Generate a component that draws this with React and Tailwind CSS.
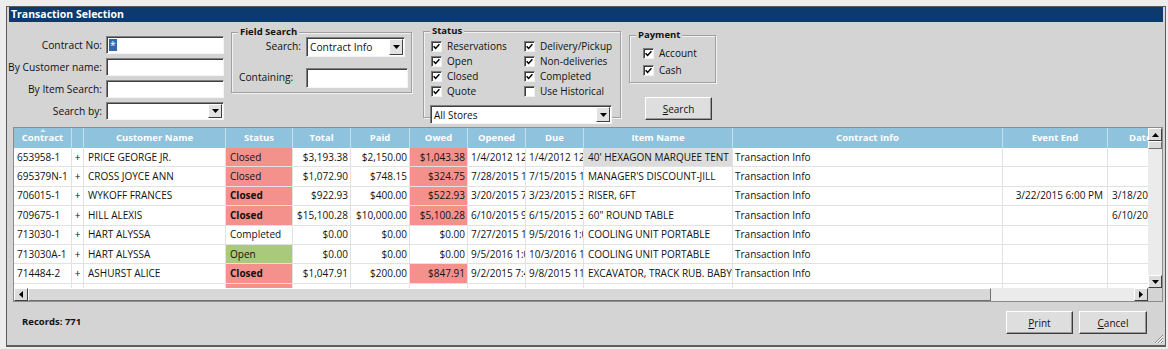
import React from "react";

const rows = [
  { contract: "653958-1", name: "PRICE GEORGE JR.", status: "Closed", bold: false, total: "$3,193.38", paid: "$2,150.00", owed: "$1,043.38", opened: "1/4/2012 12:00 PM", due: "1/4/2012 12:00 PM", item: "40' HEXAGON MARQUEE TENT", itemSel: true, eventEnd: "", dateOut: "" },
  { contract: "695379N-1", name: "CROSS JOYCE ANN", status: "Closed", bold: false, total: "$1,072.90", paid: "$748.15", owed: "$324.75", opened: "7/28/2015 11:02 AM", due: "7/15/2015 11:00 AM", item: "MANAGER'S DISCOUNT-JILL", eventEnd: "", dateOut: "" },
  { contract: "706015-1", name: "WYKOFF FRANCES", status: "Closed", bold: true, total: "$922.93", paid: "$400.00", owed: "$522.93", opened: "3/20/2015 7:14 PM", due: "3/23/2015 3:00 PM", item: "RISER, 6FT", eventEnd: "3/22/2015 6:00 PM", dateOut: "3/18/2015 9:00 AM" },
  { contract: "709675-1", name: "HILL ALEXIS", status: "Closed", bold: true, total: "$15,100.28", paid: "$10,000.00", owed: "$5,100.28", opened: "6/10/2015 9:41 AM", due: "6/15/2015 3:00 PM", item: "60\" ROUND TABLE", eventEnd: "", dateOut: "6/10/2015 9:00 AM" },
  { contract: "713030-1", name: "HART ALYSSA", status: "Completed", bold: false, total: "$0.00", paid: "$0.00", owed: "$0.00", opened: "7/27/2015 10:12 AM", due: "9/5/2016 1:00 PM", item: "COOLING UNIT PORTABLE", eventEnd: "", dateOut: "" },
  { contract: "713030A-1", name: "HART ALYSSA", status: "Open", bold: false, total: "$0.00", paid: "$0.00", owed: "$0.00", opened: "9/5/2016 1:00 PM", due: "10/3/2016 1:00 PM", item: "COOLING UNIT PORTABLE", eventEnd: "", dateOut: "" },
  { contract: "714484-2", name: "ASHURST ALICE", status: "Closed", bold: true, total: "$1,047.91", paid: "$200.00", owed: "$847.91", opened: "9/2/2015 7:45 AM", due: "9/8/2015 11:00 AM", item: "EXCAVATOR, TRACK RUB. BABY", eventEnd: "", dateOut: "" },
  { contract: "714502-1", name: "MILLER DAVID", status: "Closed", bold: false, total: "$1,210.00", paid: "$1,210.00", owed: "$0.00", opened: "9/3/2015 8:10 AM", due: "9/9/2015 11:00 AM", item: "TENT, 20X20", eventEnd: "", dateOut: "" },
];

const Check = ({ checked }) => (
  <span className="w-[11px] h-[11px] shrink-0 bg-white border border-t-[#7a7a7a] border-l-[#7a7a7a] border-b-[#f0f0f0] border-r-[#f0f0f0] shadow-[inset_1px_1px_0_#3a3a3a] flex items-center justify-center">
    {checked && (
      <svg width="7" height="7" viewBox="0 0 7 7">
        <path d="M0.6 3.2 L2.6 5.4 L6.4 1.2" stroke="#000" strokeWidth="1.5" fill="none" />
      </svg>
    )}
  </span>
);

const CheckRow = ({ label, checked }) => (
  <div className="flex items-center gap-[5px] h-[15px]">
    <Check checked={checked} />
    <span className="leading-[15px] whitespace-nowrap">{label}</span>
  </div>
);

const Sunken = ({ className = "", children }) => (
  <div className={`bg-white border border-t-[#808080] border-l-[#808080] border-b-[#f4f4f4] border-r-[#f4f4f4] shadow-[inset_1px_1px_0_#404040] flex items-center ${className}`}>
    {children}
  </div>
);

const DropButton = () => (
  <span className="ml-auto w-[14px] h-[calc(100%-2px)] mr-[1px] bg-[#e2e2e2] border border-t-white border-l-white border-b-[#404040] border-r-[#404040] flex items-center justify-center shrink-0">
    <svg width="7" height="4" viewBox="0 0 7 4">
      <polygon points="0,0 7,0 3.5,4" fill="#000" />
    </svg>
  </span>
);

const Select = ({ value, className = "" }) => (
  <Sunken className={className}>
    <span className="pl-[3px] leading-[14px] whitespace-nowrap">{value}</span>
    <DropButton />
  </Sunken>
);

const Group = ({ title, className = "", children }) => (
  <div className={`relative border border-[#a0a0a0] shadow-[1px_1px_0_#f2f2f2,inset_1px_1px_0_#f2f2f2] ${className}`}>
    <span className="absolute -top-[8px] left-[6px] bg-[#d4d4d4] px-[2px] text-[9.5px] font-bold leading-[14px]">{title}</span>
    {children}
  </div>
);

const Button = ({ hot, rest, className = "" }) => (
  <button className={`bg-[#dedede] border border-t-white border-l-white border-b-[#3c3c3c] border-r-[#3c3c3c] shadow-[inset_-1px_-1px_0_#9a9a9a] text-[10px] leading-none flex items-center justify-center ${className}`}>
    <span><span className="underline">{hot}</span>{rest}</span>
  </button>
);

const statusBg = (s) => (s === "Closed" ? "bg-[#f4918d]" : s === "Open" ? "bg-[#a9c97b]" : "");

const cell = "h-full flex items-center overflow-hidden whitespace-nowrap border-r border-b border-[#e2e2e2] shrink-0";

const label = "justify-self-end whitespace-nowrap leading-[18px]";

const App = () => {
  return (
    <div className="w-[1168px] h-[349px] bg-[#ededed] pt-[6px] pl-[6px] overflow-hidden font-['Open_Sans','Noto_Sans',sans-serif] text-[10px] text-[#111]">
      <div className="relative w-[1160px] h-[341px] border border-b-2 border-[#5c5c5c] bg-[#d4d4d4] px-[2px] flex flex-col">
        {/* title bar */}
        <div className="h-[15px] bg-[#0b3a6e] text-white font-bold text-[10.5px] leading-[15px] pl-[2px] shrink-0">
          Transaction Selection
        </div>

        {/* search form */}
        <div className="h-[105px] flex items-start shrink-0">
          <div className="mt-[14px] grid grid-cols-[93px_118px] gap-x-[4px] gap-y-[4px] text-[10.25px]">
            <span className={label}>Contract No:</span>
            <Sunken className="h-[18px]">
              <span className="ml-[2px] bg-[#3266b3] text-white leading-[12px] px-[1px]">*</span>
            </Sunken>
            <span className={label}>By Customer name:</span>
            <Sunken className="h-[18px]" />
            <span className={label}>By Item Search:</span>
            <Sunken className="h-[18px]" />
            <span className={label}>Search by:</span>
            <Select value="" className="h-[18px]" />
          </div>

          <Group title="Field Search" className="ml-[7px] mt-[10px] w-[181px] h-[61px] text-[10.25px]">
            <div className="pl-[7px] pt-[4px] grid grid-cols-[62px_auto] gap-x-[5px] gap-y-[11px] items-center">
              <span className="text-right">Search:</span>
              <Select value="Contract Info" className="h-[20px] w-[99px]" />
              <span>Containing:</span>
              <Sunken className="h-[20px] w-[102px]" />
            </div>
          </Group>

          <Group title="Status" className="ml-[11px] mt-[9px] w-[198px] h-[87px]">
            <div className="pl-[7px] pt-[7px] grid grid-cols-[93px_auto]">
              <CheckRow label="Reservations" checked />
              <CheckRow label="Delivery/Pickup" checked />
              <CheckRow label="Open" checked />
              <CheckRow label="Non-deliveries" checked />
              <CheckRow label="Closed" checked />
              <CheckRow label="Completed" checked />
              <CheckRow label="Quote" checked />
              <CheckRow label="Use Historical" />
            </div>
            <Select value="All Stores" className="ml-[6px] mt-[6px] h-[19px] w-[182px]" />
          </Group>

          <div className="ml-[8px] flex flex-col">
            <Group title="Payment" className="mt-[13px] w-[87px] h-[48px]">
              <div className="pl-[13px] pt-[10px] flex flex-col gap-[2px]">
                <CheckRow label="Account" checked />
                <CheckRow label="Cash" checked />
              </div>
            </Group>
            <Button hot="S" rest="earch" className="ml-[16px] mt-[14px] w-[67px] h-[23px]" />
          </div>
        </div>

        {/* grid */}
        <div className="ml-[4px] w-[1150px] h-[175px] border border-[#8c8c8c] bg-white flex flex-col shrink-0">
          <div className="flex h-[160px]">
            <div className="flex-1 overflow-hidden">
              <div className="w-max">
                <div className="flex h-[20px] bg-[#8fc2dc] text-white font-bold text-[9.5px]">
                  {[
                    ["Contract", "w-[58px]"],
                    ["", "w-[12px]"],
                    ["Customer Name", "w-[142px]"],
                    ["Status", "w-[67px]"],
                    ["Total", "w-[58px]"],
                    ["Paid", "w-[59px]"],
                    ["Owed", "w-[58px]"],
                    ["Opened", "w-[58px]"],
                    ["Due", "w-[58px]"],
                    ["Item Name", "w-[149px]"],
                    ["Contract Info", "w-[270px]"],
                    ["Event End", "w-[105px]"],
                    ["Date Out", "w-[86px]"],
                  ].map(([text, w], i) => (
                    <div key={i} className={`${w} relative h-full flex items-center justify-center whitespace-nowrap border-r border-[#c4deeb] shrink-0`}>
                      {i === 0 && (
                        <svg className="absolute top-[1px] left-[26px]" width="6" height="3" viewBox="0 0 6 3">
                          <polygon points="0,3 6,3 3,0" fill="#d6ebf5" />
                        </svg>
                      )}
                      {text}
                    </div>
                  ))}
                </div>
                {rows.map((r) => (
                  <div key={r.contract} className="flex h-[19.4px]">
                    <div className={`${cell} w-[58px] pl-[3px]`}>{r.contract}</div>
                    <div className={`${cell} w-[12px] justify-center`}>+</div>
                    <div className={`${cell} w-[142px] pl-[4px]`}>{r.name}</div>
                    <div className={`${cell} w-[67px] pl-[4px] ${statusBg(r.status)} ${r.bold ? "font-bold" : ""}`}>{r.status}</div>
                    <div className={`${cell} w-[58px] justify-end pr-[2px]`}>{r.total}</div>
                    <div className={`${cell} w-[59px] justify-end pr-[2px]`}>{r.paid}</div>
                    <div className={`${cell} w-[58px] justify-end pr-[2px] ${r.owed !== "$0.00" ? "bg-[#f4918d]" : ""}`}>{r.owed}</div>
                    <div className={`${cell} w-[58px] pl-[3px]`}>{r.opened}</div>
                    <div className={`${cell} w-[58px] pl-[3px]`}>{r.due}</div>
                    <div className={`${cell} w-[149px] pl-[4px] ${r.itemSel ? "bg-[#dcdcdc]" : ""}`}>{r.item}</div>
                    <div className={`${cell} w-[270px] pl-[2px]`}>Transaction Info</div>
                    <div className={`${cell} w-[105px] justify-end pr-[4px]`}>{r.eventEnd}</div>
                    <div className={`${cell} w-[86px] pl-[4px]`}>{r.dateOut}</div>
                  </div>
                ))}
              </div>
            </div>
            {/* vertical scrollbar */}
            <div className="w-[14px] bg-[#ebebeb] flex flex-col shrink-0">
              <div className="h-[13px] bg-[#dcdcdc] border border-t-white border-l-white border-b-[#404040] border-r-[#404040] flex items-center justify-center">
                <svg width="7" height="4" viewBox="0 0 7 4"><polygon points="0,4 7,4 3.5,0" fill="#000" /></svg>
              </div>
              <div className="h-[8px] bg-[#dcdcdc] border border-t-white border-l-white border-b-[#707070] border-r-[#707070]" />
              <div className="flex-1" />
              <div className="h-[13px] bg-[#dcdcdc] border border-t-white border-l-white border-b-[#404040] border-r-[#404040] flex items-center justify-center">
                <svg width="7" height="4" viewBox="0 0 7 4"><polygon points="0,0 7,0 3.5,4" fill="#000" /></svg>
              </div>
            </div>
          </div>
          {/* horizontal scrollbar */}
          <div className="flex h-[13px] bg-[#ebebeb]">
            <div className="w-[14px] bg-[#dcdcdc] border border-t-white border-l-white border-b-[#404040] border-r-[#404040] flex items-center justify-center">
              <svg width="4" height="7" viewBox="0 0 4 7"><polygon points="4,0 4,7 0,3.5" fill="#000" /></svg>
            </div>
            <div className="w-[963px] bg-[#d8d8d8] border border-t-white border-l-white border-b-[#707070] border-r-[#707070]" />
            <div className="flex-1" />
            <div className="w-[14px] bg-[#dcdcdc] border border-t-white border-l-white border-b-[#404040] border-r-[#404040] flex items-center justify-center">
              <svg width="4" height="7" viewBox="0 0 4 7"><polygon points="0,0 0,7 4,3.5" fill="#000" /></svg>
            </div>
            <div className="w-[14px] bg-[#d4d4d4]" />
          </div>
        </div>

        {/* footer */}
        <div className="flex-1 flex items-start">
          <span className="ml-[13px] mt-[13px] font-bold text-[9.5px] leading-[14px]">Records: 771</span>
          <div className="ml-auto mr-[16px] mt-[9px] flex gap-[6px]">
            <Button hot="P" rest="rint" className="w-[67px] h-[23px]" />
            <Button hot="C" rest="ancel" className="w-[68px] h-[23px]" />
          </div>
        </div>

        {/* size grip */}
        <svg className="absolute right-[1px] bottom-[1px]" width="12" height="12" viewBox="0 0 12 12">
          <path d="M11 3 L3 11 M11 6 L6 11 M11 9 L9 11" stroke="#8a8a8a" strokeWidth="1" />
          <path d="M11 4 L4 11 M11 7 L7 11 M11 10 L10 11" stroke="#ffffff" strokeWidth="1" />
        </svg>
      </div>
    </div>
  );
};

export default App;
